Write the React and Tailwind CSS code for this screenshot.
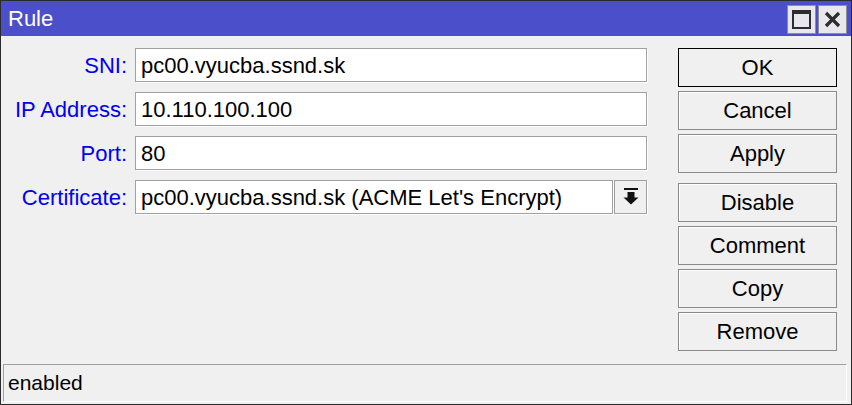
export default function App() {
  const font = { fontFamily: '"Liberation Sans", Arial, sans-serif' };
  const rows = [
    { label: "SNI:", value: "pc00.vyucba.ssnd.sk" },
    { label: "IP Address:", value: "10.110.100.100" },
    { label: "Port:", value: "80" },
  ];
  const Btn = ({ children, def }) => (
    <div
      className={
        "h-[39px] w-[159px] flex items-center justify-center text-[22px] text-black bg-[#f0f0f0] " +
        (def
          ? "border border-black"
          : "border border-[#8a8a8a] shadow-[inset_1px_1px_0_#ffffff]")
      }
    >
      {children}
    </div>
  );
  return (
    <div
      className="w-[852px] h-[405px] bg-[#f0f0f0] border border-[#2a2a2a] flex flex-col overflow-hidden"
      style={font}
    >
      {/* title bar */}
      <div className="h-[35px] bg-[#4b4fc9] flex items-center pl-[7px] pr-[4px] shrink-0">
        <div className="text-white text-[22px] leading-none flex-1">Rule</div>
        <div className="flex gap-[2px] mt-[1px]">
          <div className="w-[29px] h-[29px] bg-[#e9e7ee] border border-[#8f8f8f] flex items-center justify-center">
            <div className="w-[19px] h-[19px] border-2 border-t-4 border-[#2d2d2d]" />
          </div>
          <div className="w-[29px] h-[29px] bg-[#e9e7ee] border border-[#8f8f8f] flex items-center justify-center">
            <svg width="17" height="17" viewBox="0 0 17 17">
              <path d="M2 2 L15 15 M15 2 L2 15" stroke="#2d2d2d" strokeWidth="3.2" />
            </svg>
          </div>
        </div>
      </div>
      {/* body */}
      <div className="flex-1 flex flex-col">
        <div className="flex flex-1 pt-[12px]">
          <div className="flex flex-col gap-[10px]">
            {rows.map((r) => (
              <div key={r.label} className="flex items-center h-[34px]">
                <div className="w-[126px] text-right text-[22px] text-[#0000f0] pr-[0px]">
                  {r.label}
                </div>
                <div className="ml-[8px] w-[512px] h-[34px] bg-white border border-[#a0a0a0] shadow-[1px_1px_0_#ffffff] flex items-center pl-[5px] text-[22px] text-black">
                  {r.value}
                </div>
              </div>
            ))}
            <div className="flex items-center h-[34px]">
              <div className="w-[126px] text-right text-[22px] text-[#0000f0]">Certificate:</div>
              <div className="ml-[8px] w-[478px] h-[34px] bg-white border border-[#a0a0a0] shadow-[1px_1px_0_#ffffff] flex items-center pl-[5px] text-[22px] text-black whitespace-nowrap">
                pc00.vyucba.ssnd.sk (ACME Let's Encrypt)
              </div>
              <div className="ml-[1px] w-[33px] h-[34px] bg-[#f0f0f0] border border-[#a0a0a0] shadow-[1px_1px_0_#ffffff] flex items-center justify-center">
                <svg width="16" height="18" viewBox="0 0 16 18">
                  <rect x="1" y="0" width="14" height="2" fill="#111" />
                  <rect x="4.5" y="4" width="7" height="6" fill="#111" />
                  <path d="M0.5 9.5 L15.5 9.5 L8 16.5 Z" fill="#111" />
                </svg>
              </div>
            </div>
          </div>
          <div className="ml-[31px] flex flex-col">
            <div className="flex flex-col gap-[4px]">
              <Btn def>OK</Btn>
              <Btn>Cancel</Btn>
              <Btn>Apply</Btn>
            </div>
            <div className="flex flex-col gap-[4px] mt-[10px]">
              <Btn>Disable</Btn>
              <Btn>Comment</Btn>
              <Btn>Copy</Btn>
              <Btn>Remove</Btn>
            </div>
          </div>
        </div>
        {/* status bar */}
        <div className="ml-[2px] mr-[4px] mb-[2px] h-[38px] border-t border-l border-[#a0a0a0] border-b border-r border-b-white border-r-white flex items-center pl-[4px] text-[21px] text-black">
          enabled
        </div>
      </div>
    </div>
  );
}
